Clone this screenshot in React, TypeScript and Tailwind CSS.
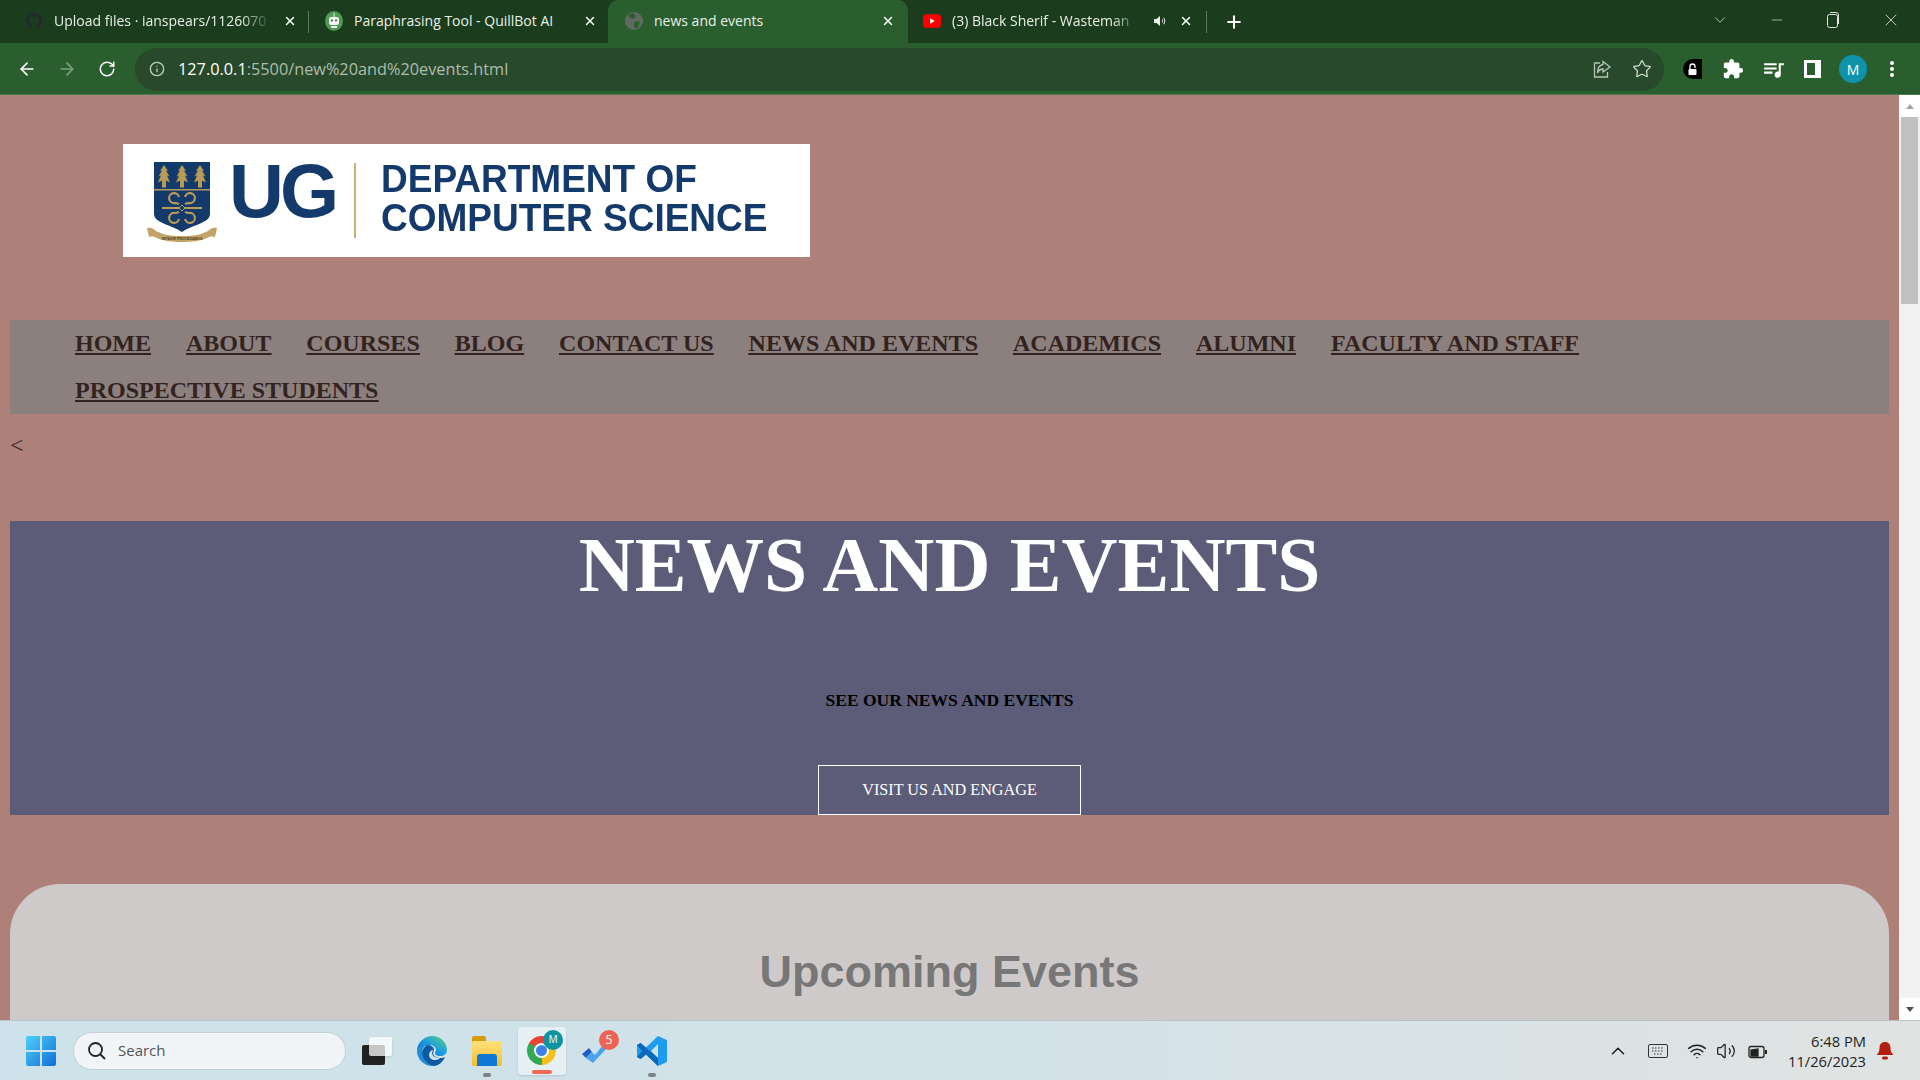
import { ArrowLeft, ArrowRight, ChevronDown, ChevronUp, Info, Minus, Plus, RotateCw, Star, Volume2, Wifi, X } from 'lucide-react';
import { MdExtension, MdQueueMusic } from 'react-icons/md';

const navLinks = [
  'HOME',
  'ABOUT',
  'COURSES',
  'BLOG',
  'CONTACT US',
  'NEWS AND EVENTS',
  'ACADEMICS',
  'ALUMNI',
  'FACULTY AND STAFF',
  'PROSPECTIVE STUDENTS',
];

function GithubIcon() {
  return (
    <svg width="20" height="20" viewBox="0 0 24 24" fill="#24292f" aria-hidden>
      <path d="M12 1a11 11 0 0 0-3.500 21.400c.6.100.8-.2.8-.5v-2c-3.100.7-3.700-1.300-3.700-1.300-.5-1.300-1.200-1.600-1.200-1.600-1-.7.1-.7.1-.7 1.100.1 1.700 1.100 1.700 1.100 1 1.700 2.600 1.200 3.200.9.1-.7.4-1.200.7-1.500-2.400-.3-5-1.200-5-5.400 0-1.200.4-2.200 1.100-2.900-.1-.3-.5-1.400.1-2.900 0 0 .9-.3 3 1.100a10.400 10.400 0 0 1 5.500 0c2.100-1.400 3-1.100 3-1.100.6 1.500.2 2.600.1 2.900.7.8 1.100 1.700 1.100 2.900 0 4.200-2.600 5.100-5 5.400.4.3.7 1 .7 2v3c0 .3.2.6.8.5A11 11 0 0 0 12 1z" />
    </svg>
  );
}

function QuillbotIcon() {
  return (
    <svg width="18" height="20" viewBox="0 0 18 20" aria-hidden>
      <ellipse cx="9" cy="10" rx="9" ry="10" fill="#4f9a55" />
      <rect x="4" y="6" width="10" height="8" rx="2" fill="#f2f5f2" />
      <circle cx="7" cy="9.500" r="1" fill="#2a5e2e" />
      <circle cx="11" cy="9.500" r="1" fill="#2a5e2e" />
      <rect x="6" y="15" width="6" height="2" fill="#f2f5f2" />
      <rect x="8.500" y="2" width="1" height="4" fill="#f2f5f2" />
    </svg>
  );
}

function GlobeIcon() {
  return (
    <svg width="18" height="18" viewBox="0 0 18 18" aria-hidden>
      <circle cx="9" cy="9" r="9" fill="#5f6b62" />
      <path d="M8 1 11 4 8 7 5 6 3 3ZM10 9l5 1-2 5-3 2-1-5Z" fill="#2a5e2e" />
    </svg>
  );
}

function YoutubeIcon() {
  return (
    <svg width="20" height="16" viewBox="0 0 20 16" aria-hidden>
      <rect width="20" height="15" y="0.500" rx="4" fill="#f00" />
      <path d="M8 5v6l5-3z" fill="#fff" />
    </svg>
  );
}

function Tab({
  icon,
  title,
  active,
  fade,
  audio,
}: {
  icon: React.ReactNode;
  title: string;
  active?: boolean;
  fade?: boolean;
  audio?: boolean;
}) {
  return (
    <div
      className={
        active
          ? 'flex h-[43px] w-[300px] shrink-0 items-center rounded-t-[10px] bg-[#2a5e2e] pb-[2px] pl-[17px] pr-[13px]'
          : audio
            ? 'flex h-[43px] w-[300px] shrink-0 items-center pb-[2px] pl-[17px] pr-[13px]'
            : 'flex h-[43px] w-[300px] shrink-0 items-center pb-[2px] pl-[17px] pr-[11px]'
      }
    >
      <span className="flex w-[18px] shrink-0 justify-center">{icon}</span>
      <span
        className={
          fade
            ? 'ml-[11px] min-w-0 flex-1 overflow-hidden whitespace-nowrap text-[14px] text-[#e8efe8] [mask-image:linear-gradient(90deg,#000_86%,transparent)]'
            : 'ml-[11px] min-w-0 flex-1 overflow-hidden whitespace-nowrap text-[14px] text-[#e8efe8]'
        }
      >
        {title}
      </span>
      {audio && <SpeakerIcon />}
      <X size={14} strokeWidth={2.500} className="ml-[12px] shrink-0 text-white" />
    </div>
  );
}

function SpeakerIcon() {
  return (
    <svg width="14" height="14" viewBox="0 0 14 14" fill="#e8efe8" className="ml-[14px] shrink-0" aria-hidden>
      <path d="M1 5h2.500L7 2v10L3.500 9H1zM9 4.500c1.200 1.500 1.200 3.500 0 5zM11 3.500c1.700 2 1.700 5 0 7l-.7-.6c1.300-1.700 1.300-4.100 0-5.800z" />
    </svg>
  );
}

function ShareIcon() {
  return (
    <svg width="20" height="20" viewBox="0 0 20 20" fill="none" stroke="#b7c4b8" strokeWidth="1.300" aria-hidden>
      <path d="M8 4H2.500v14h13v-5" />
      <path d="M11 2.500 18 8l-7 5v-3c-3 0-4.500 1.500-5.500 4 0-5 2-8 5.500-8.500z" />
    </svg>
  );
}

function RestoreIcon() {
  return (
    <svg width="14" height="20" viewBox="0 0 14 20" fill="none" stroke="currentColor" aria-hidden>
      <rect x="1.500" y="4.500" width="10" height="13" rx="2" />
      <path d="M4 2.500h6a2.500 2.500 0 0 1 2.500 2.500v9" />
    </svg>
  );
}

function BrowserChrome() {
  return (
    <>
      <div className="flex h-[43px] shrink-0 items-center bg-[#1b3d1d] pl-[8px]">
        <Tab icon={<GithubIcon />} title="Upload files · ianspears/1126070" fade />
        <div className="h-[22px] w-px shrink-0 bg-[#5e7a60]" />
        <div className="-ml-px">
          <Tab icon={<QuillbotIcon />} title="Paraphrasing Tool - QuillBot AI" />
        </div>
        <Tab icon={<GlobeIcon />} title="news and events" active />
        <div className="-ml-[2px] w-[300px] shrink-0">
          <Tab icon={<YoutubeIcon />} title="(3) Black Sherif - Wasteman" audio fade />
        </div>
        <div className="h-[22px] w-px shrink-0 bg-[#5e7a60]" />
        <Plus size={20} strokeWidth={2.500} className="ml-[17px] shrink-0 text-white" />
        <div className="ml-auto flex items-center pb-[4px] text-[#dfe7df]">
          <ChevronDown size={18} strokeWidth={1} className="mr-[40px]" />
          <Minus size={16} strokeWidth={1} className="mr-[41px]" />
          <RestoreIcon />
          <X size={20} strokeWidth={1} className="ml-[41px] mr-[19px]" />
        </div>
      </div>
      <div className="flex h-[52px] shrink-0 items-center border-b border-[#4a7a4e] bg-[#2a5e2e] pt-[1px]">
        <ArrowLeft size={20} className="ml-[17px] shrink-0 text-white" />
        <ArrowRight size={20} className="ml-[20px] shrink-0 text-[#7f9f82]" />
        <RotateCw size={18} className="ml-[21px] shrink-0 text-white" />
        <div className="ml-[19px] flex h-[43px] w-[1529px] shrink-0 items-center rounded-full bg-[#29492c] pl-[14px] pr-[12px]">
          <Info size={16} className="shrink-0 text-[#c2ccc3]" />
          <span className="ml-[13px] text-[16.300px] text-white">
            127.0.0.1<span className="text-[#aebcae]">:5500/new%20and%20events.html</span>
          </span>
          <span className="ml-auto flex items-center gap-[20px]">
            <ShareIcon />
            <Star size={20} strokeWidth={1.500} className="text-[#d3dcd3]" />
          </span>
        </div>
        <span className="ml-[19px] flex h-[20px] w-[19px] shrink-0 items-center justify-center rounded-l-full rounded-r-[2px] bg-black">
          <svg width="10" height="13" viewBox="0 0 10 13" aria-hidden>
            <rect x="0.500" y="6" width="8" height="6" rx="1" fill="#fff" />
            <path d="M2 6V3.500a2.500 2.500 0 0 1 5 0V5" fill="none" stroke="#fff" strokeWidth="1.300" />
          </svg>
        </span>
        <MdExtension size={22} className="ml-[19.500px] shrink-0 text-white" />
        <MdQueueMusic size={25} className="ml-[17px] shrink-0 text-white" />
        <span className="ml-[18.500px] h-[18px] w-[17px] shrink-0 border-y-[3px] border-l-[3px] border-r-[6px] border-white" />
        <span className="ml-[18px] flex h-[28px] w-[28px] shrink-0 items-center justify-center rounded-full bg-[#0e93ab] text-[14px] text-white">
          M
        </span>
        <span className="ml-[23px] flex shrink-0 flex-col gap-[2.500px]">
          <span className="h-[3.500px] w-[3.500px] rounded-full bg-white" />
          <span className="h-[3.500px] w-[3.500px] rounded-full bg-white" />
          <span className="h-[3.500px] w-[3.500px] rounded-full bg-white" />
        </span>
      </div>
    </>
  );
}

function Tree({ x }: { x: number }) {
  return (
    <path
      d={`M${x} 3l4 6-2-.5 3.500 6-2.500-1 3 7-4-2v7h-4v-7l-4 2 3-7-2.500 1 3.500-6-2 .5z`}
      fill="#b99a56"
    />
  );
}

function Crest() {
  return (
    <svg width="70" height="80" viewBox="0 0 70 80" className="shrink-0" aria-hidden>
      <path d="M7 0h56v52c0 9-18 11-28 18-10-7-28-9-28-18z" fill="#143a6b" />
      <rect x="7" y="27" width="56" height="1.500" fill="#b99a56" />
      <Tree x={17} />
      <Tree x={35} />
      <Tree x={53} />
      <g fill="none" stroke="#b99a56" strokeWidth="2.200">
        <path d="M32 42c-2-1-3-1-4-1a5 5 0 1 1 4-6M38 42c2-1 3-1 4-1a5 5 0 1 0-4-6" />
        <path d="M32 50c-2 1-3 1-4 1a5 5 0 1 0 4 6M38 50c2 1 3 1 4 1a5 5 0 1 1-4 6" />
        <path d="M15 46h40" />
      </g>
      <path d="M35 43l3 3-3 3-3-3z" fill="#143a6b" stroke="#b99a56" />
      <path d="M0 66c4-1 7 1 9 3 6 3 12 5 26 5s20-2 26-5c2-2 5-4 9-3l-2 9c-4-1-6 0-8 1-6 3-15 4-25 4s-19-1-25-4c-2-1-4-2-8-1z" fill="#c3a468" />
      <text x="35" y="78" textAnchor="middle" fontSize="3.500" fontFamily="Liberation Sans" fill="#4a3c1c">
        INTEGRI PROCEDAMUS
      </text>
    </svg>
  );
}

function Logo() {
  return (
    <div className="ml-[113px] flex h-[113px] w-[687px] items-center bg-white pl-[24px] font-['Liberation_Sans',sans-serif] font-bold text-[#143a6b]">
      <div className="pt-[3px]">
        <Crest />
      </div>
      <span className="ml-[12px] pb-[19px] text-[76px] leading-none tracking-[-4px]">UG</span>
      <div className="ml-[19px] h-[75px] w-[2px] bg-[#c9ae75]" />
      <div className="ml-[25px] pb-[5px] text-[37px] leading-[39.500px]">
        <div className="scale-y-[1.06]">DEPARTMENT OF</div>
        <div className="scale-y-[1.06]">COMPUTER SCIENCE</div>
      </div>
    </div>
  );
}

function Scrollbar() {
  return (
    <div className="flex w-[21px] shrink-0 flex-col items-center bg-[#f1f1f1]">
      <div className="flex h-[22px] w-full items-center justify-center bg-white">
        <span className="h-0 w-0 border-x-[4.500px] border-b-[5px] border-x-transparent border-b-[#a3a3a3]" />
      </div>
      <div className="h-[187px] w-[17px] bg-[#c1c1c1]" />
      <div className="mt-auto flex h-[22px] w-full items-center justify-center bg-white">
        <span className="h-0 w-0 border-x-[4.500px] border-t-[5px] border-x-transparent border-t-[#505050]" />
      </div>
    </div>
  );
}

function Page() {
  return (
    <div className="flex min-h-0 flex-1">
      <div className="min-w-0 flex-1 overflow-hidden bg-[#ae807a] px-[10px] pt-[49px] font-['Liberation_Serif',serif]">
        <Logo />
        <nav className="mt-[63px] flex h-[94px] flex-wrap gap-x-[35px] bg-[#8c807e] pl-[65px] text-[24px] font-bold leading-[46.500px] text-[#33231f] underline">
          {navLinks.map((l) => (
            <a key={l} href="#" className="whitespace-nowrap">
              {l}
            </a>
          ))}
        </nav>
        <p className="mt-[21px] text-[24px] leading-[20px] text-[#33231f]">&lt;</p>
        <section className="mt-[66px] flex h-[294px] flex-col items-center bg-[#5c5c78]">
          <h1 className="text-[77.600px] font-bold leading-[88px] text-white">NEWS AND EVENTS</h1>
          <p className="mt-[81px] text-[17.500px] font-bold leading-[20px] text-black">SEE OUR NEWS AND EVENTS</p>
          <a
            href="#"
            className="mt-auto flex h-[50px] w-[263px] items-center justify-center border-[1.500px] border-white text-[16.200px] text-white"
          >
            VISIT US AND ENGAGE
          </a>
        </section>
        <section className="mt-[69px] h-[400px] rounded-t-[50px] bg-[#cfcaca] pt-[58px] text-center">
          <h2 className="font-['Liberation_Sans',sans-serif] text-[45px] font-bold leading-[60px] text-[#777777]">
            Upcoming Events
          </h2>
        </section>
      </div>
      <Scrollbar />
    </div>
  );
}

function Taskbar() {
  return (
    <div className="flex h-[60px] shrink-0 items-center border-t border-[#b8c2c6] bg-gradient-to-r from-[#cde2ea] via-[#d2e2e8] to-[#e0e3e2] font-['Open_Sans',sans-serif]">
      <svg width="30" height="30" viewBox="0 0 30 30" className="ml-[26px] shrink-0" aria-hidden>
        <defs>
          <linearGradient id="win" x1="0" y1="0" x2="1" y2="1">
            <stop offset="0" stopColor="#4fd0f8" />
            <stop offset="1" stopColor="#0f6fd8" />
          </linearGradient>
          <linearGradient id="edge" x1="0" y1="1" x2="1" y2="0">
            <stop offset="0" stopColor="#0c59a4" />
            <stop offset="0.500" stopColor="#1b9de2" />
            <stop offset="1" stopColor="#5ad66f" />
          </linearGradient>
        </defs>
        <path d="M0 2a2 2 0 0 1 2-2h12v14H0zM16 0h12a2 2 0 0 1 2 2v12H16zM0 16h14v14H2a2 2 0 0 1-2-2zM16 16h14v12a2 2 0 0 1-2 2H16z" fill="url(#win)" />
      </svg>
      <div className="ml-[17px] flex h-[38px] w-[273px] shrink-0 items-center rounded-full border border-[#c5d0d4] bg-[#f1f5f7] pl-[13px]">
        <svg width="20" height="20" viewBox="0 0 20 20" fill="none" stroke="#222" strokeWidth="1.800" aria-hidden>
          <circle cx="8.500" cy="8.500" r="6.500" />
          <path d="m13 13 5 5" />
        </svg>
        <span className="ml-[11px] text-[15px] text-[#555]">Search</span>
      </div>
      <div className="relative ml-[16px] h-[28px] w-[30px] shrink-0">
        <div className="absolute bottom-0 left-0 h-[20px] w-[23px] rounded-[2px] bg-[#222]" />
        <div className="absolute right-0 top-0 h-[19px] w-[23px] rounded-[2px] bg-white/75 shadow-sm" />
      </div>
      <svg width="30" height="30" viewBox="0 0 30 30" className="ml-[25px] shrink-0" aria-hidden>
        <path d="M15 0c8 0 15 6 15 14 0 4-3 6-7 6-3 0-5-1-5-3 0-1 1-2 1-3 0-3-3-5-7-5C6 9 1 12 0 15 0 7 7 0 15 0z" fill="url(#edge)" />
        <path d="M0 15c1-4 6-6 10-6-3 1-5 4-5 8 0 6 5 12 12 13-1 0-1 0-2 0C7 30 0 23 0 15z" fill="#1b8fdc" />
        <path d="M5 17c0-3 2-6 5-8 4 0 7 2 7 5 0 1-1 2-1 3 0 3 4 5 7 5 2 0 3 0 5-1-2 5-7 9-11 9-7-1-12-7-12-13z" fill="#0c59a4" />
        <path d="M12 19c0-3 2-5 4-5 0 1-1 2-1 3 0 3 4 5 8 5-2 2-4 2-5 2-3 0-6-2-6-5z" fill="#d2e2e8" />
      </svg>
      <div className="relative ml-[25px] h-[30px] w-[30px] shrink-0">
        <div className="absolute left-0 top-0 h-[8px] w-[14px] rounded-t-[2px] bg-[#d99a0b]" />
        <div className="absolute bottom-0 left-0 h-[25px] w-[30px] rounded-[2px] bg-gradient-to-b from-[#ffe27a] to-[#f5bd1f]" />
        <div className="absolute bottom-0 left-[5px] h-[12px] w-[20px] rounded-t-[3px] bg-[#0f78d4]" />
        <div className="absolute left-1/2 top-[37px] h-[4px] w-[8px] -translate-x-1/2 rounded-full bg-[#7d8488]" />
      </div>
      <div className="relative ml-[16px] flex h-[48px] w-[48px] shrink-0 items-center justify-center rounded-[4px] bg-[#e6f0f4] shadow-sm">
        <div className="mr-[2px] h-[29px] w-[29px] rounded-full bg-[conic-gradient(from_-60deg,#ea4335_0deg_120deg,#f2c21b_120deg_240deg,#34a853_240deg_360deg)]" />
        <div className="absolute left-[16px] h-[15px] w-[15px] rounded-full border-2 border-white bg-[#3f7fe8]" />
        <span className="absolute right-[3px] top-[3px] flex h-[20px] w-[20px] items-center justify-center rounded-full bg-[#0e93a0] text-[10px] font-semibold text-[#cfe6e6]">
          M
        </span>
        <div className="absolute bottom-[1px] h-[4px] w-[20px] rounded-full bg-[#f06a55]" />
      </div>
      <div className="relative ml-[16px] h-[30px] w-[36px] shrink-0">
        <svg width="25" height="18" viewBox="0 0 25 18" className="absolute left-0 top-[9px]" aria-hidden>
          <path d="M7 3 0 9l4 4 6-6z" fill="#1d5fc4" />
          <path d="M4 13l6-6 3 3 8-10 4 3-14 15z" fill="#4aa3ec" />
        </svg>
        <span className="absolute -top-[6px] right-[-1px] flex h-[20px] w-[20px] items-center justify-center rounded-full bg-[#ee6352] text-[12px] text-white">
          5
        </span>
      </div>
      <div className="relative ml-[19px] h-[30px] w-[30px] shrink-0">
        <svg width="30" height="30" viewBox="0 0 30 30" aria-hidden>
          <path d="M21 0 30 4v22l-9 4L9 18.500 3.500 23 0 21v-12l3.500-2L9 11.500zM21 8l-7 7 7 7z" fill="#1f9cf0" fillRule="evenodd" />
          <path d="M0 9l3.500-2L21 22v8L9 18.500 3.500 23 0 21l5-6z" fill="#0b68b8" />
        </svg>
        <div className="absolute left-1/2 top-[37px] h-[4px] w-[8px] -translate-x-1/2 rounded-full bg-[#7d8488]" />
      </div>
      <div className="ml-auto flex items-center text-[#222]">
        <ChevronUp size={22} strokeWidth={1.700} />
        <svg width="20" height="14" viewBox="0 0 20 14" fill="none" stroke="#333" className="ml-[19px]" aria-hidden>
          <rect x="0.500" y="0.500" width="19" height="13" rx="1.500" />
          <path d="M4 4h12M4 7h12M6 10h8" strokeDasharray="1.500 1.500" />
        </svg>
        <Wifi size={20} strokeWidth={1.800} className="ml-[19px]" />
        <Volume2 size={20} strokeWidth={1.500} className="ml-[9px]" />
        <svg width="20" height="16" viewBox="0 0 20 16" fill="none" stroke="#222" strokeWidth="1.300" className="ml-[12px]" aria-hidden>
          <rect x="1" y="3.500" width="15" height="11" rx="2" />
          <path d="M18 7v4" strokeWidth="2" />
          <path d="M3 13V7l7-1v7z" fill="#222" />
        </svg>
        <div className="ml-[20px] flex flex-col items-end text-[14.700px] leading-[20px] text-[#222]">
          <span>6:48 PM</span>
          <span>11/26/2023</span>
        </div>
        <svg width="18" height="20" viewBox="0 0 18 20" fill="#b3200f" className="ml-[10px] mr-[26px]" aria-hidden>
          <path d="M9 1c3.500 0 5.500 2.500 5.500 6 0 3.500 1 5 3 7H.500c2-2 3-3.500 3-7 0-3.500 2-6 5.500-6z" />
          <rect x="6" y="15.500" width="6" height="3" rx="1.500" />
        </svg>
      </div>
    </div>
  );
}

export default function App() {
  return (
    <div className="flex h-screen w-full flex-col overflow-hidden font-['Open_Sans',sans-serif]">
      <BrowserChrome />
      <Page />
      <Taskbar />
    </div>
  );
}
